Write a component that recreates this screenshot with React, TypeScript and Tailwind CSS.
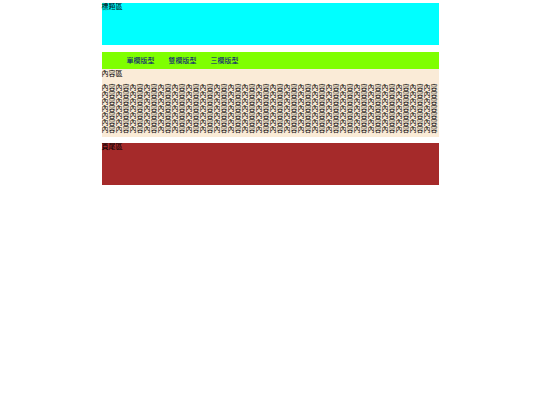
import React from "react";

export default function App() {
  const text = "內容".repeat(168);
  return (
    <div
      className="w-[337px] mx-auto pt-[3px] text-[7px] leading-[7px] text-black"
      style={{ fontFamily: '"Noto Sans CJK TC", "Noto Sans CJK SC", sans-serif' }}
    >
      <div className="h-[42px] bg-[#00ffff]">標題區</div>
      <div className="mt-[7px] h-[17px] bg-[#7fff00] flex items-center pl-[25px] gap-[14px] text-[#000080]">
        <span>單欄版型</span>
        <span>雙欄版型</span>
        <span>三欄版型</span>
      </div>
      <div className="h-[68px] bg-[#faebd7] pt-[1px]">
        <div>內容區</div>
        <p className="mt-[7px] break-all">{text}</p>
      </div>
      <div className="mt-[6px] h-[42px] bg-[#a52a2a]">頁尾區</div>
    </div>
  );
}
